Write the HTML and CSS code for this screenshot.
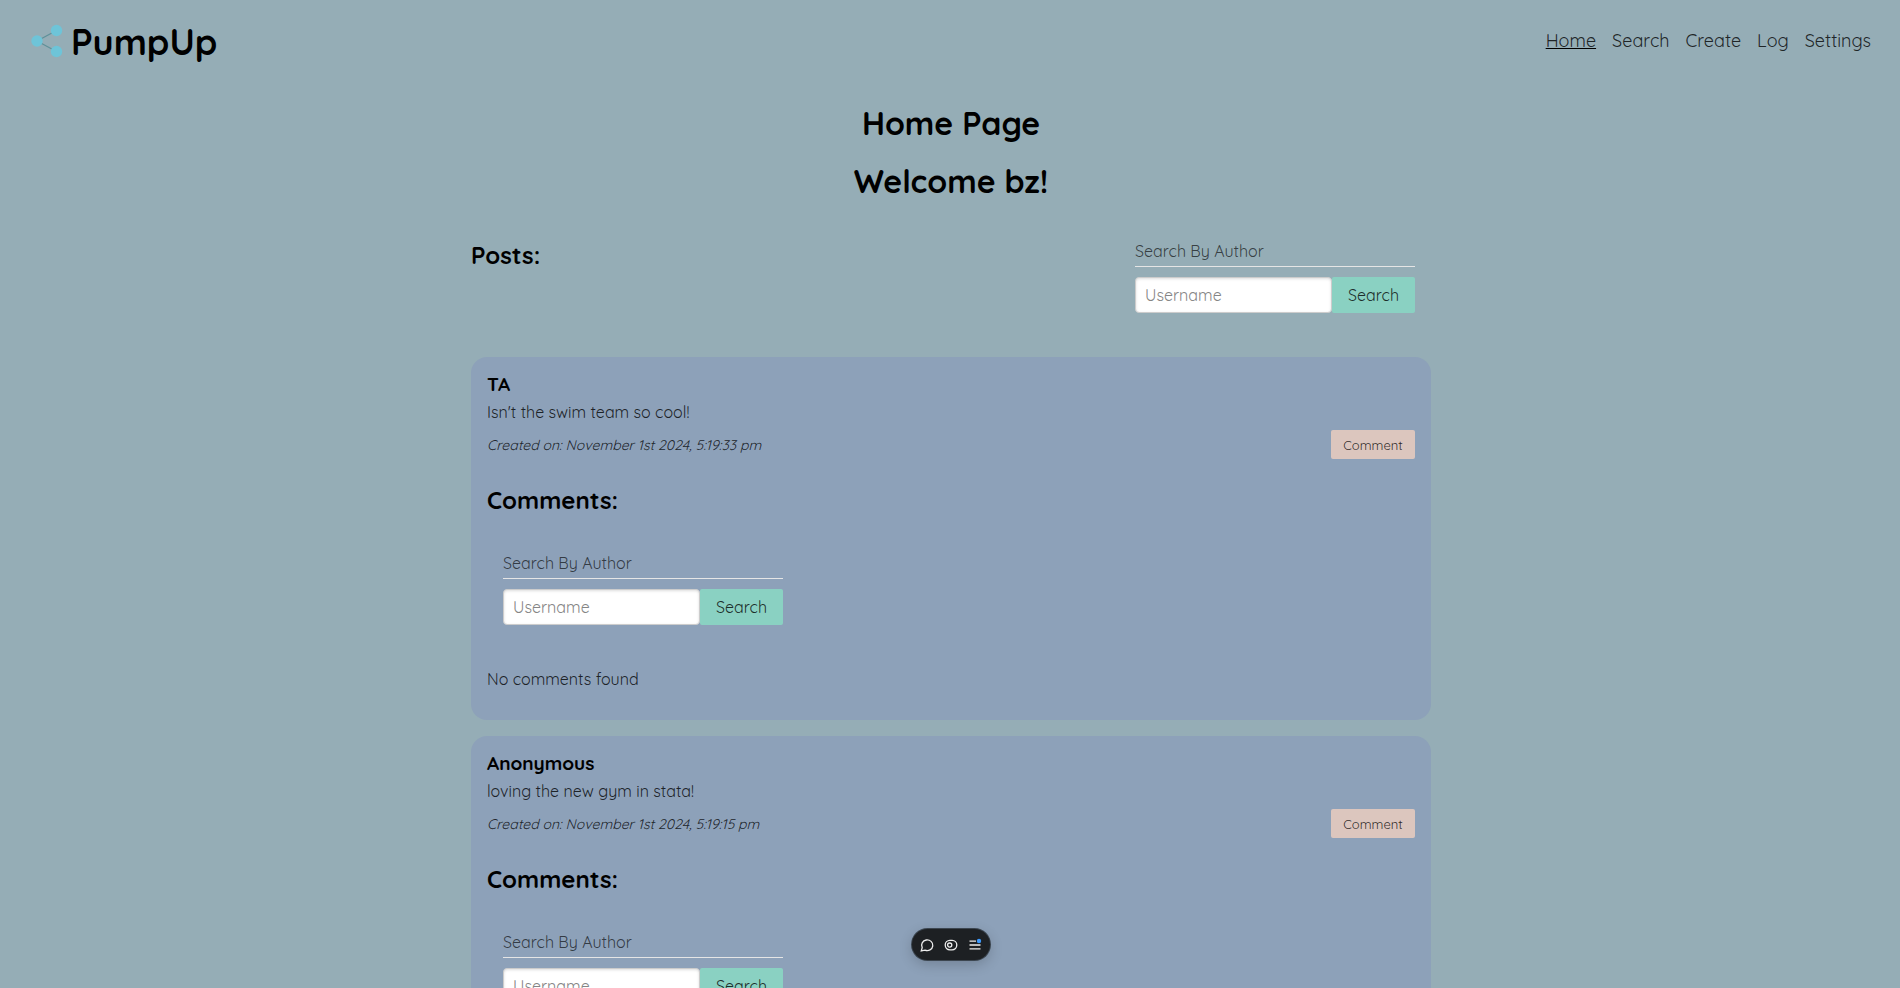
FILE: index.html
```
<!DOCTYPE html>
<html lang="en">
<head>
<meta charset="utf-8">
<title>PumpUp</title>
<link rel="stylesheet" href="styles.css">
</head>
<body>
<header class="navbar">
  <div class="brand">
    <svg class="logo" viewBox="0 0 32 34" aria-hidden="true">
      <path d="M6 17 25.500 6.500M6 17 25.500 27.500" stroke="#5f9199" stroke-width="1.300" fill="none"/>
      <g fill="#6ec4d8"><circle cx="6" cy="17" r="5.700"/><circle cx="25.500" cy="6.500" r="5.700"/><circle cx="25.500" cy="27.500" r="5.700"/></g>
    </svg>
    <span class="brand-name">PumpUp</span>
  </div>
  <nav class="links">
    <a class="active" href="#">Home</a>
    <a href="#">Search</a>
    <a href="#">Create</a>
    <a href="#">Log</a>
    <a href="#">Settings</a>
  </nav>
</header>
<main>
  <h1>Home Page</h1>
  <h1>Welcome bz!</h1>
  <section class="feed">
    <div class="feed-head">
      <h2>Posts:</h2>
      <form class="search">
        <fieldset>
          <legend>Search By Author</legend>
          <div class="search-row">
            <input type="text" placeholder="Username" aria-label="Username">
            <button type="submit">Search</button>
          </div>
        </fieldset>
      </form>
    </div>
    <article class="post">
      <p class="author">TA</p>
      <p class="content">Isn't the swim team so cool!</p>
      <div class="meta">
        <p class="stamp">Created on: November 1st 2024, 5:19:33 pm</p>
        <button class="comment" type="button">Comment</button>
      </div>
      <h2>Comments:</h2>
      <form class="search nested">
        <fieldset>
          <legend>Search By Author</legend>
          <div class="search-row">
            <input type="text" placeholder="Username" aria-label="Username">
            <button type="submit">Search</button>
          </div>
        </fieldset>
      </form>
      <p class="empty">No comments found</p>
    </article>
    <article class="post">
      <p class="author">Anonymous</p>
      <p class="content">loving the new gym in stata!</p>
      <div class="meta">
        <p class="stamp">Created on: November 1st 2024, 5:19:15 pm</p>
        <button class="comment" type="button">Comment</button>
      </div>
      <h2>Comments:</h2>
      <form class="search nested">
        <fieldset>
          <legend>Search By Author</legend>
          <div class="search-row">
            <input type="text" placeholder="Username" aria-label="Username">
            <button type="submit">Search</button>
          </div>
        </fieldset>
      </form>
    </article>
  </section>
</main>
<div class="toolbar">
  <button type="button" aria-label="Comments">
    <svg viewBox="0 0 16 16"><path d="M2.300 13.800 3.200 10.600A5.600 5.300 0 1 1 6 13.100Z"/></svg>
  </button>
  <button type="button" aria-label="Preview">
    <svg viewBox="0 0 16 16"><rect x="2.200" y="3.400" width="11.600" height="9.400" rx="4.700"/><circle cx="6.700" cy="8.100" r="2.100"/></svg>
  </button>
  <button type="button" aria-label="Menu">
    <svg viewBox="0 0 16 16"><path d="M2.500 4.200H9M2.500 8H13.500M2.500 11.900H13.500"/><circle class="dot" cx="12" cy="4" r="2.200"/></svg>
  </button>
</div>
</body>
</html>
```
FILE: styles.css
```
* { box-sizing: border-box; }
html, body { height: 100%; }
body {
  margin: 0;
  overflow: hidden;
  background: #95adb6;
  color: rgba(0, 0, 0, 0.8);
  font-family: Quicksand, Inter, sans-serif;
  font-size: 16px;
  font-weight: 400;
  line-height: 20px;
}
h1, h2, p { margin: 0; }
h1, h2, .author, .brand-name { color: #000; font-weight: 700; }
input, button { font: inherit; color: inherit; }

.navbar {
  display: flex;
  align-items: center;
  justify-content: space-between;
  height: 82px;
  padding: 0 29px 0 31px;
}
.brand { display: flex; align-items: center; gap: 8px; }
.logo { width: 32px; height: 34px; }
.brand-name { padding-top: 2px; font-size: 36px; line-height: 44px; }
.links { display: flex; gap: 16px; }
.links a { color: inherit; font-size: 18px; text-decoration: none; }
.links .active { text-decoration: underline; text-decoration-color: #000; }

main { padding: 21px 0 0 2px; }
h1 {
  margin-bottom: 18px;
  font-size: 32px;
  line-height: 40px;
  text-align: center;
}
h2 { font-size: 24px; line-height: 28px; }

.feed { display: flex; flex-direction: column; gap: 16px; max-width: 960px; margin: 0 auto; }
.feed-head { display: flex; justify-content: space-between; padding: 22px 16px 28px 0; }
.search { width: 280px; }
fieldset { min-width: 0; margin: 0; padding: 0; border: 0; }
legend {
  width: 100%;
  margin-bottom: 10px;
  padding: 0 0 5px;
  border-bottom: 1px solid #e5e5e5;
  color: rgba(0, 0, 0, 0.65);
}
.search-row { display: flex; }
.search-row input {
  flex: 1;
  min-width: 0;
  height: 36px;
  padding: 8px 9px;
  border: 1px solid #ccc;
  border-radius: 4px;
  background: #fff;
  box-shadow: inset 0 1px 3px #ddd;
}
.search-row input::placeholder { color: #858585; opacity: 1; }
.search-row button {
  width: 83px;
  padding: 0;
  border: 0;
  border-radius: 2px;
  background: #8ad1c2;
}

.post {
  padding: 15px 16px 31px;
  border-radius: 16px;
  background: #8da1b9;
}
.author { font-size: 19px; line-height: 24px; }
.content { margin: 6px 0 8px; }
.meta { display: flex; align-items: center; justify-content: space-between; margin-bottom: 27px; }
.stamp { font-size: 14px; font-style: italic; }
.comment {
  width: 84px;
  height: 29px;
  padding: 0;
  border: 0;
  border-radius: 2px;
  background: #dcc6be;
  font-size: 13px;
}
.nested { margin: 39px 16px 44px; }

.toolbar {
  position: fixed;
  bottom: 28px;
  left: 50%;
  display: flex;
  align-items: center;
  justify-content: center;
  gap: 8px;
  width: 78px;
  height: 31px;
  margin-left: -38px;
  border-radius: 16px;
  background: #1d2023;
  box-shadow: 0 0 0 1px #3c4650, 0 4px 14px rgba(0, 0, 0, 0.2);
}
.toolbar button { display: flex; padding: 0; border: 0; background: none; }
.toolbar svg { width: 16px; height: 16px; fill: none; stroke: #ededed; stroke-width: 1.300; }
.toolbar .dot { fill: #3e9bff; stroke: none; }
```
